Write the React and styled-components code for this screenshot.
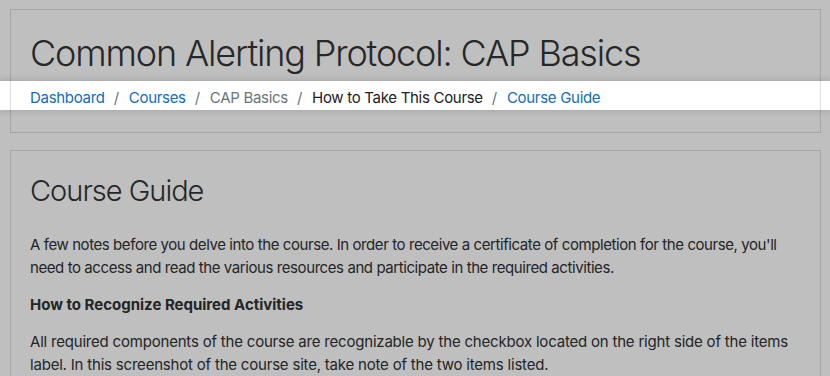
import styled, { createGlobalStyle } from "styled-components";

const GlobalStyle = createGlobalStyle`
  body {
    margin: 0;
    background: #bfbfbf;
    font-family: Inter, "Noto Sans", "Liberation Sans", sans-serif;
    overflow: hidden;
  }
`;

const crumbs = [
  { label: "Dashboard", kind: "link" },
  { label: "Courses", kind: "link" },
  { label: "CAP Basics", kind: "muted" },
  { label: "How to Take This Course", kind: "current" },
  { label: "Course Guide", kind: "link" },
];

export default function App() {
  return (
    <>
      <GlobalStyle />
      <Page>
        <HeaderPanel>
          <PageTitle>Common Alerting Protocol: CAP Basics</PageTitle>
          <CrumbStrip>
            {crumbs.map((c, i) => (
              <Crumb key={c.label}>
                {i > 0 && <Separator>/</Separator>}
                <CrumbText $kind={c.kind}>{c.label}</CrumbText>
              </Crumb>
            ))}
          </CrumbStrip>
        </HeaderPanel>

        <ContentPanel>
          <SectionTitle>Course Guide</SectionTitle>
          <Paragraph $tracking={-0.42}>
            A few notes before you delve into the course. In order to receive a
            certificate of completion for the course, you'll need to access and
            read the various resources and participate in the required
            activities.
          </Paragraph>
          <Paragraph>
            <strong>How to Recognize Required Activities</strong>
          </Paragraph>
          <Paragraph $tracking={-0.2}>
            All required components of the course are recognizable by the
            checkbox located on the right side of the items label. In this
            screenshot of the course site, take note of the two items listed.
          </Paragraph>
        </ContentPanel>
      </Page>
    </>
  );
}

const Page = styled.div`
  display: flex;
  flex-direction: column;
  gap: 17px;
  padding: 9px 9px 0 10px;
`;

const Panel = styled.section`
  position: relative;
  padding: 0 20px;

  &::after {
    content: "";
    position: absolute;
    inset: 0;
    border: 1px solid rgba(0, 0, 0, 0.13);
    pointer-events: none;
  }
`;

const HeaderPanel = styled(Panel)`
  padding-top: 23px;
  padding-bottom: 23px;
`;

const ContentPanel = styled(Panel)`
  padding: 24px 8px 20px 20px;
`;

const PageTitle = styled.h1`
  margin: 0;
  font-size: 36px;
  font-weight: 300;
  line-height: 1.2;
  color: #262728;
  letter-spacing: -1.15px;
`;

const CrumbStrip = styled.nav`
  display: flex;
  align-items: center;
  height: 29px;
  margin: 6px -30px 0 -31px;
  padding: 3px 30px 0 31px;
  box-sizing: border-box;
  background: #fff;
  box-shadow: 0 0 8px rgba(0, 0, 0, 0.18);
  font-size: 15px;
  letter-spacing: -0.3px;
`;

const Crumb = styled.span`
  display: flex;
  align-items: center;
`;

const Separator = styled.span`
  color: #6a737b;
  padding: 0 10px 0 9px;
`;

const crumbColors = {
  link: "#0f6cbf",
  muted: "#6a737b",
  current: "#1d2125",
};

const CrumbText = styled.span`
  color: ${(p) => crumbColors[p.$kind]};
`;

const SectionTitle = styled.h2`
  margin: 0 0 24px;
  font-size: 29px;
  font-weight: 300;
  line-height: 1.2;
  color: #262728;
  letter-spacing: -1px;
`;

const Paragraph = styled.p`
  margin: 0 0 14px;
  font-size: 15px;
  line-height: 23px;
  color: #232526;
  letter-spacing: ${(p) => (p.$tracking ?? 0)}px;

  strong {
    font-weight: 700;
  }
`;
